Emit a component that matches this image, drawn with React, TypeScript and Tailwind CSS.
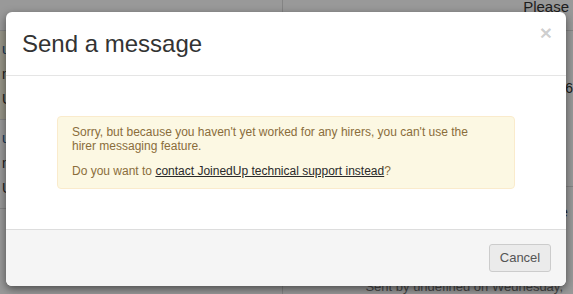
export default function App() {
  return (
    <div className="relative h-[294px] w-[573px] overflow-hidden bg-white font-['Liberation_Sans',Arial,sans-serif] text-[#333]">
      {/* Page behind the modal */}
      <div className="flex h-full">
        <div className="flex w-[293px] flex-col border-r border-[#ddd]">
          <div className="h-[31px] border-b border-[#ddd]" />
          <div className="flex h-[89px] flex-col gap-[8px] border-b border-[#ddd] bg-[#fcf8e3] px-[2px] pt-[10px] text-[14px] leading-[17px]">
            <span className="text-[#1a5a96]">undefined</span>
            <span>message</span>
            <span>Unread</span>
          </div>
          <div className="flex h-[89px] flex-col gap-[8px] border-b border-[#ddd] px-[2px] pt-[10px] text-[14px] leading-[17px]">
            <span className="text-[#1a5a96]">undefined</span>
            <span>message</span>
            <span>Unread</span>
          </div>
        </div>
        <div className="flex flex-1 flex-col">
          <div className="flex h-[31px] justify-end border-b border-[#ddd] pr-[4px] text-[15px] leading-[14px]">
            <span className="pl-[240px]">Please select</span>
          </div>
          <div className="flex h-[156px] items-center justify-end border-b border-[#ddd] pb-[40px] text-[14px]">
            <span className="pl-[274px]">6</span>
          </div>
          <div className="flex flex-col pl-[269px] pt-[18px] text-[14px] leading-[15px]">
            <span>ne</span>
            <span className="text-[#c09853]">J</span>
            <span>m</span>
          </div>
          <div className="mt-auto flex justify-end text-[13px] leading-[14px] text-[#777]">
            <span className="pr-[10px]">Sent by undefined on Wednesday,</span>
          </div>
        </div>
      </div>

      {/* Backdrop */}
      <div className="absolute inset-0 bg-black/40" />

      {/* Modal */}
      <div className="absolute left-[6px] top-[12px] flex h-[274px] w-[560px] flex-col overflow-hidden rounded-[6px] bg-white shadow-[0_3px_9px_rgba(0,0,0,0.5)]">
        <div className="relative flex h-[64px] items-center border-b border-[#e5e5e5] px-[16px]">
          <h4 className="text-[24px] leading-[26px] text-[#333]">Send a message</h4>
          <button className="absolute right-[14px] top-[10px] text-[21px] font-bold leading-[21px] text-black/20">
            ×
          </button>
        </div>
        <div className="flex flex-1 flex-col px-[51px] pt-[40px]">
          <div className="rounded-[4px] border border-[#faebcc] bg-[#fcf8e3] pb-[10px] pl-[14px] pr-[36px] pt-[8px] text-[12px] leading-[14px] text-[#8a6d3b]">
            <p>
              Sorry, but because you haven't yet worked for any hirers, you can't use the hirer messaging feature.
            </p>
            <p className="mt-[11px]">
              Do you want to{" "}
              <a className="text-[#2a2a2a] underline" href="#">
                contact JoinedUp technical support instead
              </a>
              ?
            </p>
          </div>
        </div>
        <div className="flex h-[57px] items-center justify-end border-t border-[#ddd] bg-[#f5f5f5] px-[15px]">
          <button className="h-[28px] w-[62px] rounded-[3px] border border-[#ccc] bg-[#ebebeb] text-[13px] text-[#555]">
            Cancel
          </button>
        </div>
      </div>
    </div>
  );
}
